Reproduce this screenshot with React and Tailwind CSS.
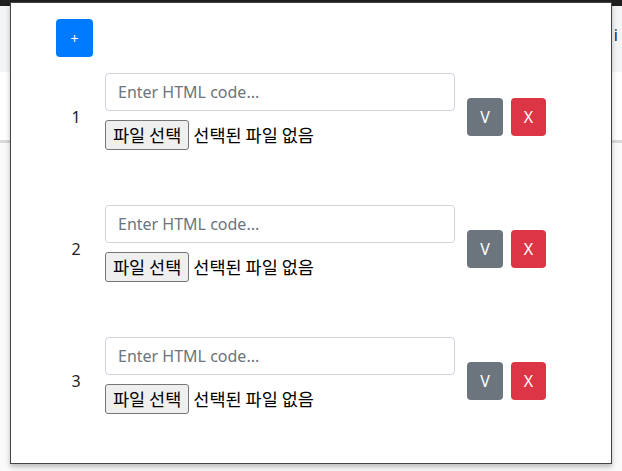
import { useState } from "react";

const FONT = {
  fontFamily: '"Noto Sans", "Noto Sans CJK KR", sans-serif',
};

const KR = {
  fontFamily: '"Noto Sans CJK KR", "Noto Sans", sans-serif',
};

function FileField() {
  return (
    <div className="flex items-start mt-[9px] h-[40px]" style={KR}>
      <span className="h-[30px] px-[7px] flex items-center border border-[#767676] bg-[#efefef] rounded-[3px] text-[17.5px] text-black leading-none">
        파일 선택
      </span>
      <span className="h-[30px] flex items-center ml-[4px] text-[17.5px] text-black leading-none">
        선택된 파일 없음
      </span>
    </div>
  );
}

function Row({ index, value, onChange }) {
  return (
    <div className="flex items-center">
      <span className="w-[40px] text-center text-[16px] text-[#212529]">
        {index}
      </span>
      <div className="ml-[9px] w-[350px] flex flex-col">
        <input
          type="text"
          value={value}
          onChange={(e) => onChange(e.target.value)}
          placeholder="Enter HTML code..."
          className="h-[38px] w-full px-3 border border-[#ced4da] rounded-[4px] text-[16px] text-[#495057] placeholder:text-[#6c757d] outline-none"
        />
        <FileField />
      </div>
      <div className="ml-[12px] flex gap-2">
        <button className="w-[36px] h-[38px] rounded-[4px] bg-[#6c757d] text-white text-[16px]">
          V
        </button>
        <button className="w-[35px] h-[38px] rounded-[4px] bg-[#dc3545] text-white text-[16px]">
          X
        </button>
      </div>
    </div>
  );
}

export default function App() {
  const [rows, setRows] = useState(["", "", ""]);

  const update = (i, v) => setRows((prev) => prev.map((r, j) => (j === i ? v : r)));

  return (
    <div className="relative w-full h-[471px] overflow-hidden bg-white" style={FONT}>
      {/* page behind the modal */}
      <div className="flex flex-col h-full">
        <div className="h-[6px] bg-[#1f1f1f]" />
        <div className="h-[66px] bg-[#f3f4f6] flex justify-end items-center pb-[8px]">
          <span className="mr-[4px] text-[16px] text-[#212529]">i</span>
        </div>
        <div className="h-[68px] bg-white" />
        <div className="h-[3px] bg-[#d9d9d9]" />
        <div className="flex-1 bg-[#fafafa]" />
      </div>

      {/* modal */}
      <div className="absolute left-[10px] top-[2px] w-[602px] h-[462px] bg-white border border-[#444] shadow-[0_3px_5px_rgba(0,0,0,0.25)]">
        <div className="pl-[45px] pt-[16px] flex flex-col">
          <button className="w-[37px] h-[38px] rounded-[4px] bg-[#007bff] text-white text-[14px] self-start">
            +
          </button>
          <div className="mt-[16px] flex flex-col gap-[45px]">
            {rows.map((r, i) => (
              <Row key={i} index={i + 1} value={r} onChange={(v) => update(i, v)} />
            ))}
          </div>
        </div>
      </div>
    </div>
  );
}
